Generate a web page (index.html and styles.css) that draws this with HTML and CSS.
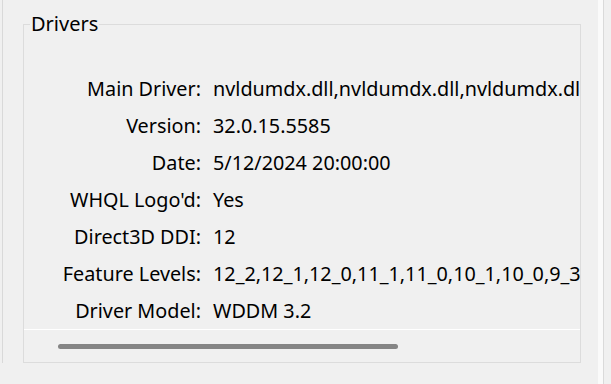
FILE: index.html
```html
<!DOCTYPE html>
<html lang="en">
<head>
    <meta charset="UTF-8">
    <title>Drivers</title>
    <link rel="stylesheet" href="styles.css">
</head>
<body>
    <div class="left-edge"></div>
    <fieldset class="group">
        <legend>Drivers</legend>
        <div class="list">
            <div class="rows">
                <span class="label">Main Driver:</span>
                <span class="value">nvldumdx.dll,nvldumdx.dll,nvldumdx.dll,nvldumdx.dll</span>
                <span class="label">Version:</span>
                <span class="value">32.0.15.5585</span>
                <span class="label">Date:</span>
                <span class="value">5/12/2024 20:00:00</span>
                <span class="label">WHQL Logo'd:</span>
                <span class="value">Yes</span>
                <span class="label">Direct3D DDI:</span>
                <span class="value">12</span>
                <span class="label">Feature Levels:</span>
                <span class="value">12_2,12_1,12_0,11_1,11_0,10_1,10_0,9_3,9_2,9_1</span>
                <span class="label">Driver Model:</span>
                <span class="value">WDDM 3.2</span>
            </div>
        </div>
        <div class="hscroll">
            <div class="thumb"></div>
        </div>
    </fieldset>
    <div class="right-edge"></div>
</body>
</html>
```

FILE: styles.css
```css
body {
    margin: 0;
    background-color: #f0f0f0;
    color: #000;
    font-family: "Noto Sans", sans-serif;
    font-size: 19.8px;
    display: flex;
    align-items: flex-start;
    height: 384px;
    overflow: hidden;
}
.left-edge {
    width: 2px;
    height: 363px;
    border-right: 1px solid #d9d9d9;
}
.group {
    margin: 12px 0 0 20px;
    padding: 0;
    width: 556px;
    border: 1px solid #dcdcdc;
    min-width: 0;
}
.group legend {
    margin-left: 6px;
    padding: 0 1px;
    font-size: 20px;
    line-height: 24px;
}
.list {
    padding-top: 34px;
    border-bottom: 1px solid #ffffff;
    overflow: hidden;
}
.rows {
    display: grid;
    grid-template-columns: 177px max-content;
    column-gap: 12px;
    line-height: 37px;
    white-space: nowrap;
}
.label {
    text-align: right;
}
.hscroll {
    height: 32px;
    padding-top: 14px;
    box-sizing: border-box;
}
.thumb {
    margin-left: 34px;
    width: 340px;
    height: 5px;
    border-radius: 3px;
    background: #858585;
}
.right-edge {
    margin-left: 17px;
    width: 5px;
    height: 384px;
    background: #fafafa;
    border-right: 1px solid #dadada;
}
```
